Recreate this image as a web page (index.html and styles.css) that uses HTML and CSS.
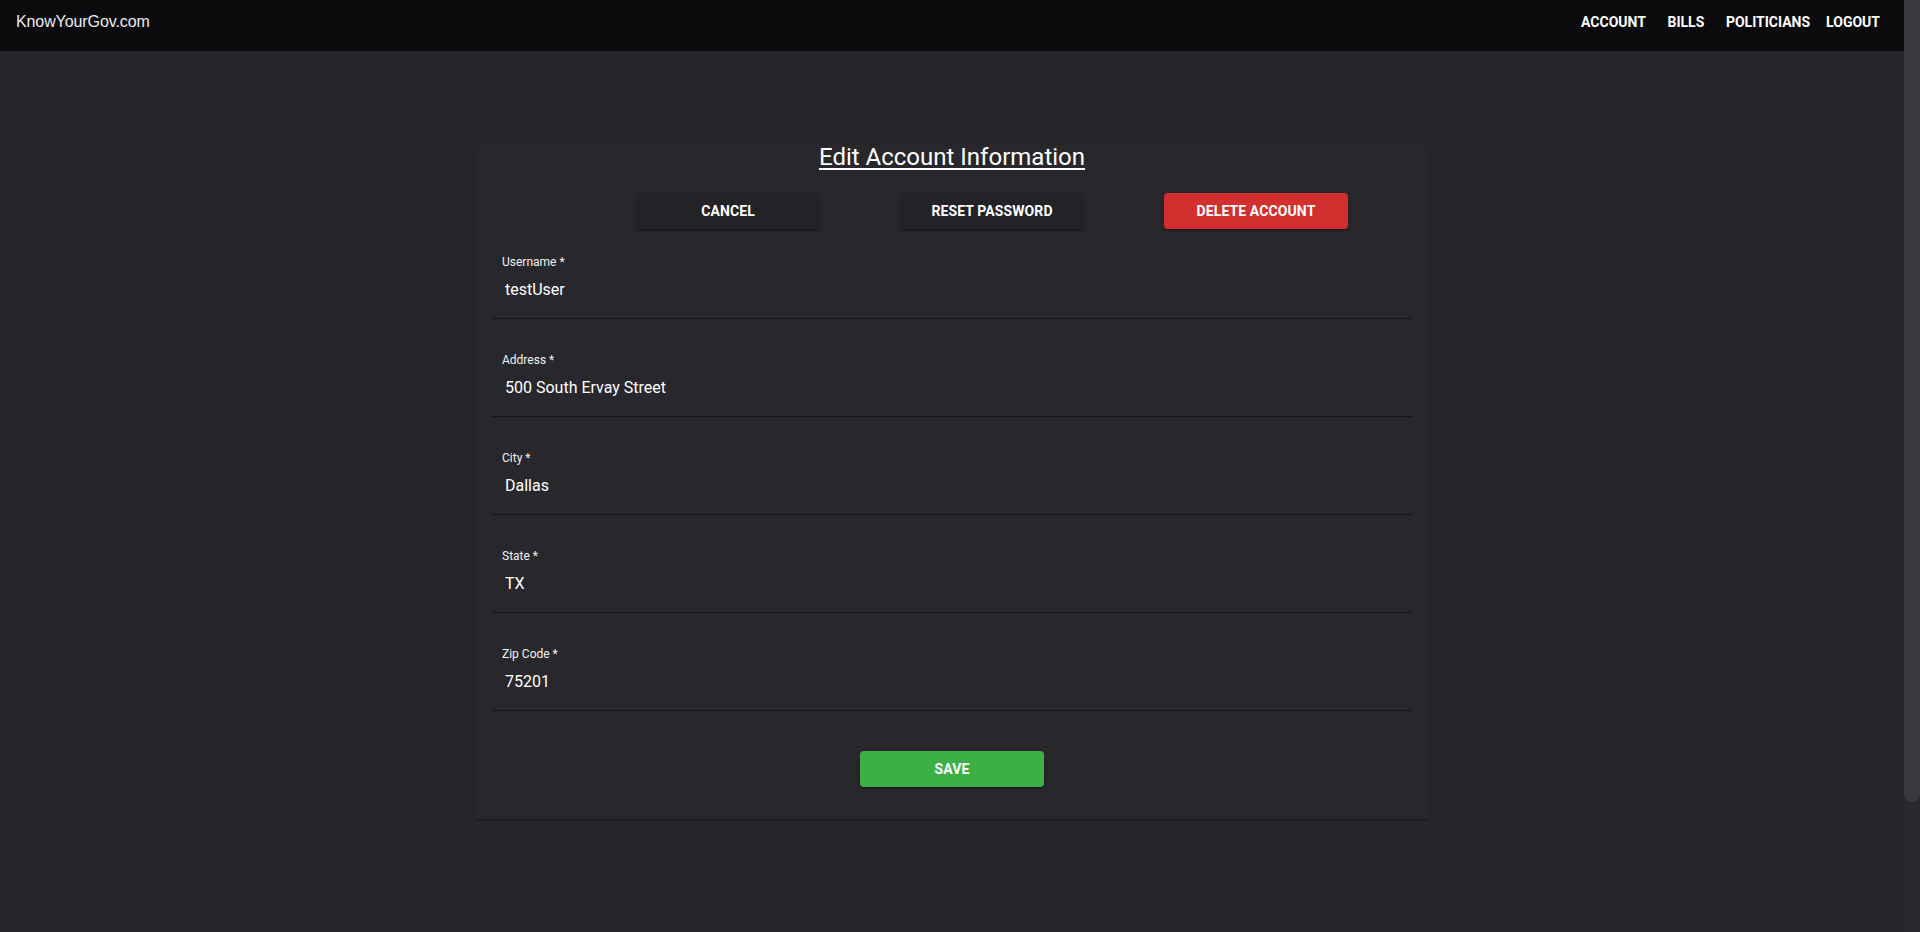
FILE: index.html
```html
<!DOCTYPE html>
<html lang="en">
<head>
<meta charset="utf-8">
<title>KnowYourGov.com - Edit Account</title>
<link rel="stylesheet" href="styles.css">
</head>
<body>
<div class="page">
  <header class="appbar">
    <div class="logo">KnowYourGov.com</div>
    <nav class="nav">
      <a class="nav-btn">Account</a>
      <a class="nav-btn">Bills</a>
      <a class="nav-btn">Politicians</a>
      <a class="nav-btn">Logout</a>
    </nav>
  </header>
  <main class="main">
    <section class="card">
      <h1 class="title">Edit Account Information</h1>
      <div class="actions">
        <button class="btn btn-dark">Cancel</button>
        <button class="btn btn-dark">Reset Password</button>
        <button class="btn btn-red">Delete Account</button>
      </div>
      <div class="fields">
        <div class="field">
          <label class="label">Username *</label>
          <div class="value">testUser</div>
        </div>
        <div class="field">
          <label class="label">Address *</label>
          <div class="value">500 South Ervay Street</div>
        </div>
        <div class="field">
          <label class="label">City *</label>
          <div class="value">Dallas</div>
        </div>
        <div class="field">
          <label class="label">State *</label>
          <div class="value">TX</div>
        </div>
        <div class="field">
          <label class="label">Zip Code *</label>
          <div class="value">75201</div>
        </div>
      </div>
      <div class="save-row">
        <button class="btn btn-green">Save</button>
      </div>
    </section>
  </main>
</div>
<div class="scrollbar"><div class="scrollbar-thumb"></div></div>
</body>
</html>
```

FILE: styles.css
```css
html {
  background: #26252a;
}
body {
  margin: 0;
  background: #26252a;
  font-family: Roboto, "Liberation Sans", Arial, sans-serif;
  color: #ffffff;
  overflow: hidden;
}
.page {
  margin-right: 16px;
}
.appbar {
  height: 51px;
  box-sizing: border-box;
  background: #0b0b0d;
  display: flex;
  align-items: flex-start;
  justify-content: space-between;
  padding: 12px 16px 0 16px;
}
.logo {
  font-family: "Liberation Sans", Arial, sans-serif;
  font-size: 16px;
  line-height: 20px;
  letter-spacing: -0.1px;
  color: #ededed;
}
.nav {
  display: flex;
}
.nav-btn {
  min-width: 64px;
  box-sizing: border-box;
  padding: 0 8px;
  text-align: center;
  font-size: 14px;
  line-height: 20px;
  font-weight: 700;
  letter-spacing: 0;
  text-transform: uppercase;
  color: #ffffff;
}
.main {
  padding: 94px 0 100px;
}
.card {
  width: 952px;
  margin: 0 auto;
  box-sizing: border-box;
  background: #28272c;
  border-radius: 4px;
  box-shadow: 0 2px 1px -1px rgba(0,0,0,0.2), 0 1px 1px 0 rgba(0,0,0,0.14), 0 1px 3px 0 rgba(0,0,0,0.12);
  padding: 0 16px 32px;
}
.title {
  margin: 0;
  text-align: center;
  font-size: 24px;
  line-height: 24px;
  font-weight: 400;
  text-decoration: underline;
  text-underline-offset: 3px;
}
.actions {
  display: flex;
  justify-content: center;
  gap: 80px;
  padding-left: 80px;
  margin-top: 24px;
}
.btn {
  width: 184px;
  height: 36px;
  border: none;
  border-radius: 4px;
  font-family: Roboto, "Liberation Sans", Arial, sans-serif;
  font-size: 14px;
  font-weight: 700;
  letter-spacing: 0.1px;
  text-transform: uppercase;
  color: #ffffff;
  box-shadow: 0 3px 1px -2px rgba(0,0,0,0.2), 0 2px 2px 0 rgba(0,0,0,0.14), 0 1px 5px 0 rgba(0,0,0,0.12);
  cursor: pointer;
}
.btn-dark {
  background: #232227;
}
.btn-red {
  background: #d32f2f;
}
.btn-green {
  background: #3cb044;
}
.fields {
  margin-top: 25px;
  display: flex;
  flex-direction: column;
  gap: 33px;
}
.field {
  display: flex;
  flex-direction: column;
  border-bottom: 1px solid #151418;
  padding-bottom: 16px;
}
.label {
  font-size: 12px;
  line-height: 16px;
  padding-left: 10px;
  font-weight: 400;
  color: #f2f2f2;
}
.value {
  margin-top: 8px;
  font-size: 16px;
  line-height: 24px;
  padding-left: 13px;
  color: #ffffff;
}
.save-row {
  margin-top: 40px;
  display: flex;
  justify-content: center;
}
.scrollbar {
  position: fixed;
  top: 0;
  right: 0;
  width: 16px;
  height: 100%;
  background: #28272c;
}
.scrollbar-thumb {
  height: 802px;
  background: #3a393e;
  border-radius: 0 0 8px 8px;
}
```
